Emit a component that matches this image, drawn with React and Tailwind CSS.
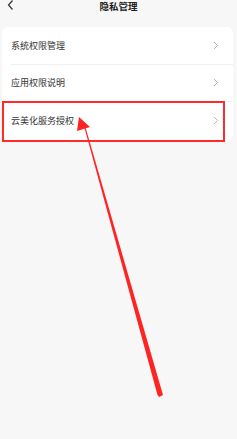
import React from 'react'

const rows = ['系统权限管理', '应用权限说明', '云美化服务授权']

function Chevron() {
  return (
    <svg width="6" height="9" viewBox="0 0 6 9" fill="none">
      <path d="M1 1l3.5 3.5L1 8" stroke="#b8b8b8" strokeWidth="1" />
    </svg>
  )
}

export default function App() {
  return (
    <div
      className="relative w-[237px] h-[439px] overflow-hidden bg-[#f7f7f7]"
      style={{ fontFamily: '"Noto Sans CJK SC", "Noto Sans", sans-serif' }}
    >
      <div className="relative h-[12px] flex items-start justify-center pt-px">
        <svg className="absolute left-[7px] top-0" width="7" height="10" viewBox="0 0 7 10" fill="none">
          <path d="M5.5 0.5L1.5 5l4 4.5" stroke="#333" strokeWidth="1.2" />
        </svg>
        <span className="text-[9.5px] leading-[10px] font-bold text-[#222]">隐私管理</span>
      </div>

      <div className="ml-[2px] mr-[4px] mt-[15px] bg-white rounded-[6px]">
        {rows.map((r, i) => (
          <div key={r} className="h-[37.5px] pl-[9px] flex">
            <div
              className={`flex-1 flex items-center justify-between pr-[14px] ${
                i < rows.length - 1 ? 'border-b border-[#efefef]' : ''
              }`}
            >
              <span className="text-[9px] text-[#333]">{r}</span>
              <Chevron />
            </div>
          </div>
        ))}
      </div>

      <div className="absolute left-[2px] top-[101px] w-[223px] h-[41px] border-2 border-[#ff2b2b]" />

      <svg className="absolute left-0 top-0" width="237" height="439" viewBox="0 0 237 439">
        <polygon points="84.5,128 85.7,128 163,395 159,397 157.5,395" fill="#ff2424" />
        <polygon points="79,117 77,131 90,127" fill="#ff2424" />
      </svg>
    </div>
  )
}
